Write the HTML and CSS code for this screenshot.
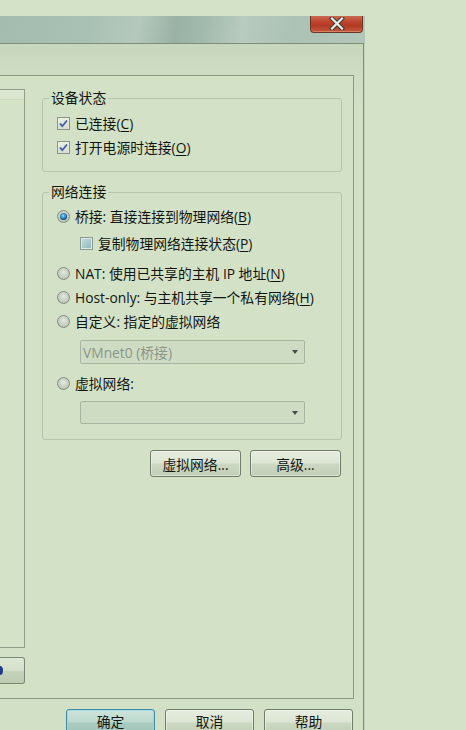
FILE: index.html
```html
<!DOCTYPE html>
<html lang="zh-CN">
<head>
<meta charset="utf-8">
<title>虚拟机设置</title>
<link rel="stylesheet" href="styles.css">
</head>
<body>
<div class="screen">
  <div class="window">
    <div class="titlebar">
      <div class="close">
        <svg width="20" height="13" viewBox="0 0 20 13"><path d="M5 1.5 L15 11.5 M15 1.5 L5 11.5" stroke="#3b3b3b" stroke-width="4.2" stroke-linecap="square"/><path d="M5 1.5 L15 11.5 M15 1.5 L5 11.5" stroke="#e9ede6" stroke-width="2.2" stroke-linecap="square"/></svg>
      </div>
    </div>
    <div class="client">
      <div class="tabpanel">
        <div class="leftcol">
          <div class="listbox"><div class="listhead"></div></div>
          <div class="leftbtn"><span class="glyph"></span></div>
        </div>
        <div class="rightcol">
          <fieldset class="group g1">
            <legend>设备状态</legend>
            <div class="row"><span class="check on"><svg width="11" height="11" viewBox="0 0 11 11"><path d="M2 5.5 L4.3 8.2 L9 2.5" fill="none" stroke="#3f5d9b" stroke-width="1.8"/></svg></span><span>已连接(<u>C</u>)</span></div>
            <div class="row"><span class="check on"><svg width="11" height="11" viewBox="0 0 11 11"><path d="M2 5.5 L4.3 8.2 L9 2.5" fill="none" stroke="#3f5d9b" stroke-width="1.8"/></svg></span><span>打开电源时连接(<u>O</u>)</span></div>
          </fieldset>
          <fieldset class="group g2">
            <legend>网络连接</legend>
            <div class="row"><span class="radio on"></span><span>桥接: 直接连接到物理网络(<u>B</u>)</span></div>
            <div class="row sub"><span class="check fill"></span><span>复制物理网络连接状态(<u>P</u>)</span></div>
            <div class="row nat"><span class="radio"></span><span>NAT: 使用已共享的主机 IP 地址(<u>N</u>)</span></div>
            <div class="row"><span class="radio"></span><span>Host-only: 与主机共享一个私有网络(<u>H</u>)</span></div>
            <div class="row"><span class="radio"></span><span>自定义: 指定的虚拟网络</span></div>
            <div class="combo c1"><span class="ctext">VMnet0 (桥接)</span><span class="arrow"></span></div>
            <div class="row vnet"><span class="radio"></span><span>虚拟网络:</span></div>
            <div class="combo c2"><span class="ctext"></span><span class="arrow"></span></div>
          </fieldset>
          <div class="btnrow">
            <div class="btn w91">虚拟网络...</div>
            <div class="btn w91">高级...</div>
          </div>
        </div>
      </div>
      <div class="dlgbtns">
        <div class="btn def">确定</div>
        <div class="btn">取消</div>
        <div class="btn">帮助</div>
      </div>
    </div>
  </div>
</div>
</body>
</html>
```

FILE: styles.css
```css
* { box-sizing: border-box; }
html, body { margin: 0; padding: 0; }
body {
  background: #d4e3c8;
  font-family: "Open Sans", "Noto Sans CJK SC", sans-serif;
  font-size: 13.8px;
  color: #121511;
}
.screen {
  width: 466px;
  height: 730px;
  padding-top: 16px;
  overflow: hidden;
}
.window {
  width: 365px;
  height: 714px;
  display: flex;
  flex-direction: column;
  background: #c3d3b9;
}
.titlebar {
  flex: none;
  height: 27px;
  display: flex;
  justify-content: flex-end;
  align-items: flex-start;
  padding-right: 2px;
  background: linear-gradient(100deg, #a4bcaf 0%, #a9c1b4 25%, #b4c9bc 38%, #9ab2a5 48%, #a2baad 56%, #b7cbbe 66%, #acc2b5 80%, #b2c7ba 100%);
}
.close {
  width: 53px;
  height: 17px;
  border: 1px solid #6a3628;
  border-top: none;
  border-radius: 0 0 4px 4px;
  background: linear-gradient(#c96a50 0%, #c0452d 35%, #b23a24 60%, #c4583c 100%);
  box-shadow: inset 0 -1px 0 rgba(255,200,170,0.35);
  display: flex;
  justify-content: center;
  align-items: flex-start;
  padding-top: 1px;
}
.client {
  flex: 1;
  min-height: 0;
  overflow: hidden;
  margin-right: 1px;
  border-top: 1px solid #7f8e79;
  border-right: 1px solid #7f8e79;
  background: linear-gradient(#c8d7bc 0px, #cddcc2 30px, #d2e1c6 60px, #d2e1c6 100%);
  padding: 31px 9px 0 0;
  display: flex;
  flex-direction: column;
}
.tabpanel {
  flex: none;
  width: 354px;
  height: 624px;
  border: 1px solid #8a9884;
  border-left: none;
  background: #d3e2c7;
  display: flex;
}
.leftcol {
  width: 25px;
  padding-top: 13px;
  display: flex;
  flex-direction: column;
}
.listbox {
  flex: none;
  height: 559px;
  border: 1px solid #8f9d89;
  border-left: none;
  background: #d4e3c8;
}
.listhead {
  height: 10px;
  background: linear-gradient(#dde8d3, #d9e5cf);
  border-bottom: 1px solid #cbd9c0;
}
.leftbtn {
  flex: none;
  margin-top: 9px;
  height: 27px;
  border: 1px solid #7b8876;
  border-left: none;
  border-radius: 0 3px 3px 0;
  background: linear-gradient(#dfe8d6 0%, #d4dfca 50%, #c6d3bb 52%, #bfccb4 100%);
  display: flex;
  align-items: center;
}
.glyph {
  width: 6px;
  height: 9px;
  margin-left: -3px;
  border-radius: 50%;
  background: #233b8a;
}
.rightcol {
  width: 300px;
  margin-left: 17px;
  display: flex;
  flex-direction: column;
}
.group {
  margin: 0;
  padding: 0;
  border: 1px solid #b7c5ad;
  border-radius: 3px;
  min-inline-size: 0;
}
.group legend {
  padding: 0 2px;
  margin-left: 6px;
  line-height: 16px;
}
.g1 { margin-top: 14px; padding: 5px 0 12px; }
.g2 { margin-top: 12px; padding: 4px 0 15px; }
.row {
  height: 24px;
  display: flex;
  align-items: center;
  padding-left: 14px;
  white-space: nowrap;
}
.row.sub { padding-left: 37px; margin-top: 3px; }
.row.nat { margin-top: 6px; }
.row.vnet { margin-top: 7px; }
.check, .radio {
  width: 13px;
  height: 13px;
  flex: none;
  margin-right: 5px;
}
.check {
  border: 1px solid #8c918b;
  background: linear-gradient(#e9eee3, #d7ddd0);
  display: flex;
  align-items: center;
  justify-content: center;
}
.check.fill {
  border-color: #8a9a94;
  padding: 1px;
  background: #dfe8dc;
}
.check.fill::before {
  content: "";
  display: block;
  width: 100%;
  height: 100%;
  background: linear-gradient(135deg, #c2dcdc 0%, #a9cbcb 50%, #95bcbc 100%);
}
.radio {
  border: 1px solid #868d84;
  border-radius: 50%;
  background: radial-gradient(circle at 50% 40%, #e6eae0 0, #c9cfc3 50%, #aab2a6 100%);
  display: flex;
  align-items: center;
  justify-content: center;
}
.radio.on::before {
  content: "";
  width: 7px;
  height: 7px;
  border-radius: 50%;
  background: radial-gradient(circle at 45% 40%, #a8e6ff 0, #3796d0 35%, #124a78 70%, #0c2f4d 100%);
}
u { text-decoration: underline; text-underline-offset: 2px; }
.combo {
  flex: none;
  width: 225px;
  height: 24px;
  margin-left: 37px;
  border: 1px solid #a7b4a1;
  border-radius: 2px;
  background: #cfdcc4;
  display: flex;
  align-items: center;
  justify-content: space-between;
  padding: 0 6px 0 2px;
}
.c1 { margin-top: 7px; }
.c2 { margin-top: 6px; height: 23px; }
.ctext { color: #8b9687; white-space: nowrap; }
.arrow {
  width: 0;
  height: 0;
  border-left: 3.5px solid transparent;
  border-right: 3.5px solid transparent;
  border-top: 4px solid #464c46;
}
.btnrow {
  margin-top: 10px;
  margin-right: 1px;
  display: flex;
  justify-content: flex-end;
  gap: 9px;
}
.btn {
  flex: none;
  width: 89px;
  height: 27px;
  border: 1px solid #717c6c;
  border-radius: 3px;
  background: linear-gradient(#e6ede0 0%, #dce5d3 48%, #ccd8c1 52%, #c2cfb7 100%);
  box-shadow: inset 0 0 0 1px rgba(240,246,234,0.55);
  display: flex;
  align-items: center;
  justify-content: center;
  white-space: nowrap;
}
.btn.w91 { width: 91px; }
.dlgbtns {
  flex: none;
  margin-top: 10px;
  padding-right: 1px;
  display: flex;
  justify-content: flex-end;
  gap: 10px;
}
.dlgbtns .btn {
  align-items: flex-start;
  padding-top: 4px;
  line-height: 15px;
}
.btn.def {
  border-color: #3f8ca6;
  background: linear-gradient(#cfe4db 0%, #bcd8cd 48%, #a9cabf 52%, #a0c4b8 100%);
  box-shadow: inset 0 0 0 1px rgba(150,215,230,0.7);
}
```
